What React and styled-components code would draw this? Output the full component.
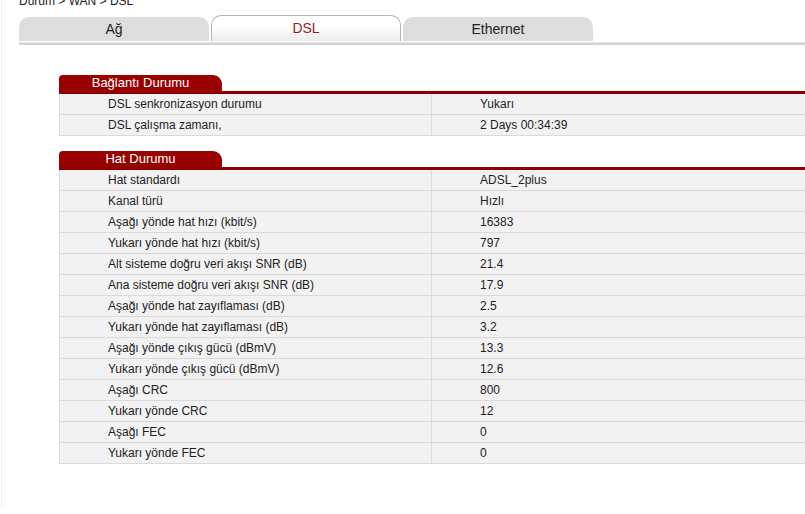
import styled, { createGlobalStyle } from 'styled-components'

const Global = createGlobalStyle`
	html, body {
		margin: 0;
		padding: 0;
		background: #fff;
		overflow: hidden;
	}
	body {
		font-family: 'Liberation Sans', Arial, sans-serif;
		color: #333;
	}
`

const connection = [
	['DSL senkronizasyon durumu', 'Yukarı'],
	['DSL çalışma zamanı,', '2 Days 00:34:39'],
]

const line = [
	['Hat standardı', 'ADSL_2plus'],
	['Kanal türü', 'Hızlı'],
	['Aşağı yönde hat hızı (kbit/s)', '16383'],
	['Yukarı yönde hat hızı (kbit/s)', '797'],
	['Alt sisteme doğru veri akışı SNR (dB)', '21.4'],
	['Ana sisteme doğru veri akışı SNR (dB)', '17.9'],
	['Aşağı yönde hat zayıflaması (dB)', '2.5'],
	['Yukarı yönde hat zayıflaması (dB)', '3.2'],
	['Aşağı yönde çıkış gücü (dBmV)', '13.3'],
	['Yukarı yönde çıkış gücü (dBmV)', '12.6'],
	['Aşağı CRC', '800'],
	['Yukarı yönde CRC', '12'],
	['Aşağı FEC', '0'],
	['Yukarı yönde FEC', '0'],
]

const tabs = ['Ağ', 'DSL', 'Ethernet']

const Section = ({ title, rows }) => (
	<Block>
		<HeaderRow>
			<HeaderTab>{title}</HeaderTab>
		</HeaderRow>
		<Table>
			<tbody>
				{rows.map(([label, value]) => (
					<tr key={label}>
						<Cell $first>{label}</Cell>
						<Cell>{value}</Cell>
					</tr>
				))}
			</tbody>
		</Table>
	</Block>
)

const App = () => {
	return (
		<Page>
			<Global />
			<Crumb>Durum &gt; WAN &gt; DSL</Crumb>
			<TabBar>
				{tabs.map((t) => (
					<Tab key={t} $active={t === 'DSL'}>
						{t}
					</Tab>
				))}
			</TabBar>
			<TabLine />
			<Content>
				<Section title='Bağlantı Durumu' rows={connection} />
				<Section title='Hat Durumu' rows={line} />
			</Content>
		</Page>
	)
}

const Page = styled.div`
	width: 840px;
	height: 514px;
	margin-left: 1px;
	border-left: 1px solid #efefef;
	padding-left: 17px;
	box-sizing: border-box;
`

const Crumb = styled.div`
	font-size: 12px;
	line-height: 14px;
	margin-top: -6px;
	color: #222;
`

const TabBar = styled.div`
	display: flex;
	align-items: flex-end;
	gap: 2px;
	height: 26px;
	margin-top: 7px;
`

const Tab = styled.div`
	width: 190px;
	box-sizing: border-box;
	height: ${(p) => (p.$active ? '26px' : '24px')};
	border-radius: 10px 10px 0 0;
	text-align: center;
	font-size: 14px;
	line-height: ${(p) => (p.$active ? '25px' : '24px')};
	background: ${(p) =>
		p.$active ? 'linear-gradient(#ffffff, #ffffff 40%, #ececec)' : '#dddddd'};
	border: ${(p) => (p.$active ? '1px solid #b4b4b4' : 'none')};
	border-bottom: none;
	color: ${(p) => (p.$active ? '#9b1b1b' : '#222')};
`

const TabLine = styled.div`
	height: 2px;
	margin-top: 1px;
	border-top: 1px solid #e6e6e6;
	background: #d2d2d2;
`

const Content = styled.div`
	padding-left: 40px;
	padding-top: 30px;
	display: flex;
	flex-direction: column;
	gap: 15px;
`

const Block = styled.div`
	width: 780px;
`

const HeaderRow = styled.div`
	display: flex;
	border-bottom: 3px solid #8e0000;
`

const HeaderTab = styled.div`
	width: 163px;
	height: 16px;
	line-height: 16px;
	font-size: 13px;
	text-align: center;
	color: #fff;
	background: #990000;
	border-radius: 4px 9px 0 0;
`

const Table = styled.table`
	width: 100%;
	border-collapse: collapse;
	font-size: 12px;
	background: #f2f2f2;
	border-left: 1px solid #dadada;
	tr {
		border-bottom: 1px solid #dadada;
	}
`

const Cell = styled.td`
	height: 20px;
	padding: 0 0 0 48px;
	line-height: 20px;
	color: #222;
	width: ${(p) => (p.$first ? '323px' : 'auto')};
	border-right: ${(p) => (p.$first ? '1px solid #dadada' : 'none')};
`

export default App
